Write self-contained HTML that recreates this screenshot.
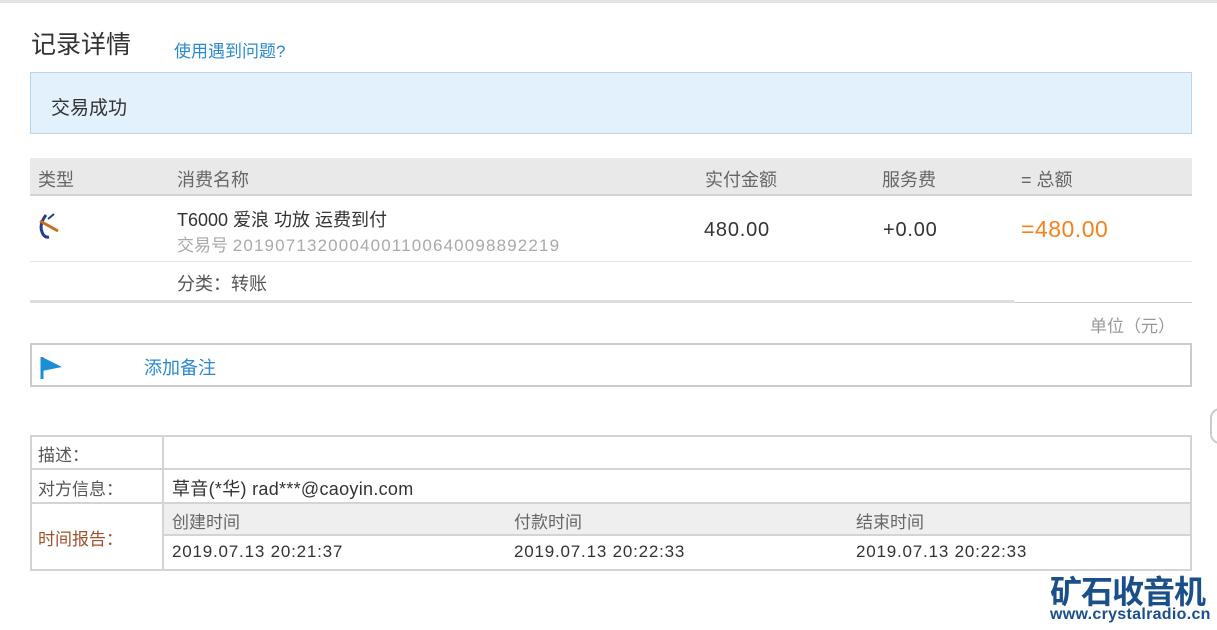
<!DOCTYPE html>
<html><head><meta charset="utf-8"><style>
*{margin:0;padding:0;box-sizing:border-box}
body{width:1217px;height:630px;background:#fff;font-family:"Liberation Sans","Noto Sans CJK SC",sans-serif;position:relative;overflow:hidden;color:#333}
.a{position:absolute;white-space:nowrap}
.n{letter-spacing:0.8px}
</style></head><body>
<div class="a" style="left:0;top:0;width:1217px;height:3px;background:#e4e4e4"></div>
<div class="a" style="left:31px;top:25px;font-size:25px;color:#333">记录详情</div>
<div class="a" style="left:174px;top:37px;font-size:17px;color:#2a8ad0">使用遇到问题?</div>
<div class="a" style="left:30px;top:72px;width:1162px;height:62px;background:#e2f1fb;border:1px solid #b9d5e6"></div>
<div class="a" style="left:51px;top:93px;font-size:19px;color:#333">交易成功</div>
<div class="a" style="left:30px;top:158px;width:1162px;height:38px;background:#e9e9e9;border-bottom:2px solid #d4d4d4"></div>
<div class="a" style="left:38px;top:166px;font-size:18px;color:#666">类型</div>
<div class="a" style="left:177px;top:166px;font-size:18px;color:#666">消费名称</div>
<div class="a" style="left:705px;top:166px;font-size:18px;color:#666">实付金额</div>
<div class="a" style="left:882px;top:166px;font-size:18px;color:#666">服务费</div>
<div class="a" style="left:1021px;top:166px;font-size:18px;color:#666">= 总额</div>
<svg class="a" style="left:36px;top:212px" width="30" height="30" viewBox="0 0 30 30"><path d="M10 3 Q3 12 6 20 Q8 26 13 25" stroke="#2b3a8c" stroke-width="3" fill="none"/><path d="M4 9 L22 19" stroke="#d06a20" stroke-width="3"/><path d="M12 7 L18 2" stroke="#2b3a8c" stroke-width="2"/></svg>
<div class="a" style="left:177px;top:206px;font-size:18px;color:#333">T6000 爱浪 功放 运费到付</div>
<div class="a" style="left:177px;top:231px;font-size:17px;color:#aaa"><span>交易号 </span><span style="letter-spacing:1.15px">2019071320004001100640098892219</span></div>
<div class="a n" style="left:704px;top:219px;font-size:20px;color:#333">480.00</div>
<div class="a n" style="left:883px;top:219px;font-size:20px;color:#333">+0.00</div>
<div class="a" style="left:1021px;top:216px;font-size:23px;color:#f7821b;letter-spacing:0.5px">=480.00</div>
<div class="a" style="left:30px;top:261px;width:1162px;height:1px;background:#e6e6e6"></div>
<div class="a" style="left:177px;top:270px;font-size:18px;color:#555">分类：转账</div>
<div class="a" style="left:30px;top:300px;width:984px;height:3px;background:#ddd"></div>
<div class="a" style="left:1014px;top:302px;width:178px;height:1px;background:#ccc"></div>
<div class="a" style="left:1090px;top:312px;font-size:17px;color:#999">单位（元）</div>
<div class="a" style="left:30px;top:343px;width:1162px;height:44px;border:2px solid #ccc"></div>
<svg class="a" style="left:40px;top:355px" width="24" height="26"><path d="M2 2 L2 24" stroke="#1a8fd6" stroke-width="3"/><path d="M2 2 L22 12 L2 16Z" fill="#1a8fd6"/></svg>
<div class="a" style="left:144px;top:354px;font-size:18px;color:#2a8ad0">添加备注</div>
<div class="a" style="left:1210px;top:408px;width:20px;height:36px;border:2px solid #ccc;border-radius:10px"></div>
<div class="a" style="left:30px;top:435px;width:1162px;height:136px;border:2px solid #d4d4d4"></div>
<div class="a" style="left:162px;top:435px;width:2px;height:136px;background:#d4d4d4"></div>
<div class="a" style="left:30px;top:468px;width:1162px;height:2px;background:#d4d4d4"></div>
<div class="a" style="left:30px;top:502px;width:1162px;height:2px;background:#d4d4d4"></div>
<div class="a" style="left:164px;top:504px;width:1026px;height:32px;background:#efefef;border-bottom:2px solid #d4d4d4"></div>
<div class="a" style="left:38px;top:441px;font-size:17px;color:#555">描述：</div>
<div class="a" style="left:38px;top:475px;font-size:17px;color:#555">对方信息：</div>
<div class="a" style="left:172px;top:475px;font-size:18px;color:#333;letter-spacing:0.3px">草音(*华) rad***@caoyin.com</div>
<div class="a" style="left:38px;top:525px;font-size:17px;color:#a0522d">时间报告：</div>
<div class="a" style="left:172px;top:508px;font-size:17px;color:#666">创建时间</div>
<div class="a" style="left:514px;top:508px;font-size:17px;color:#666">付款时间</div>
<div class="a" style="left:856px;top:508px;font-size:17px;color:#666">结束时间</div>
<div class="a n" style="left:172px;top:542px;font-size:17px;color:#333">2019.07.13 20:21:37</div>
<div class="a n" style="left:514px;top:542px;font-size:17px;color:#333">2019.07.13 20:22:33</div>
<div class="a n" style="left:856px;top:542px;font-size:17px;color:#333">2019.07.13 20:22:33</div>
<div class="a" style="left:1050px;top:567px;font-size:32px;font-weight:bold;color:#1a4f8a;letter-spacing:-1px">矿石收音机</div>
<div class="a" style="left:1050px;top:606px;font-size:16px;font-weight:bold;color:#1a4f8a;letter-spacing:0.3px">www.crystalradio.cn</div>
</body></html>
